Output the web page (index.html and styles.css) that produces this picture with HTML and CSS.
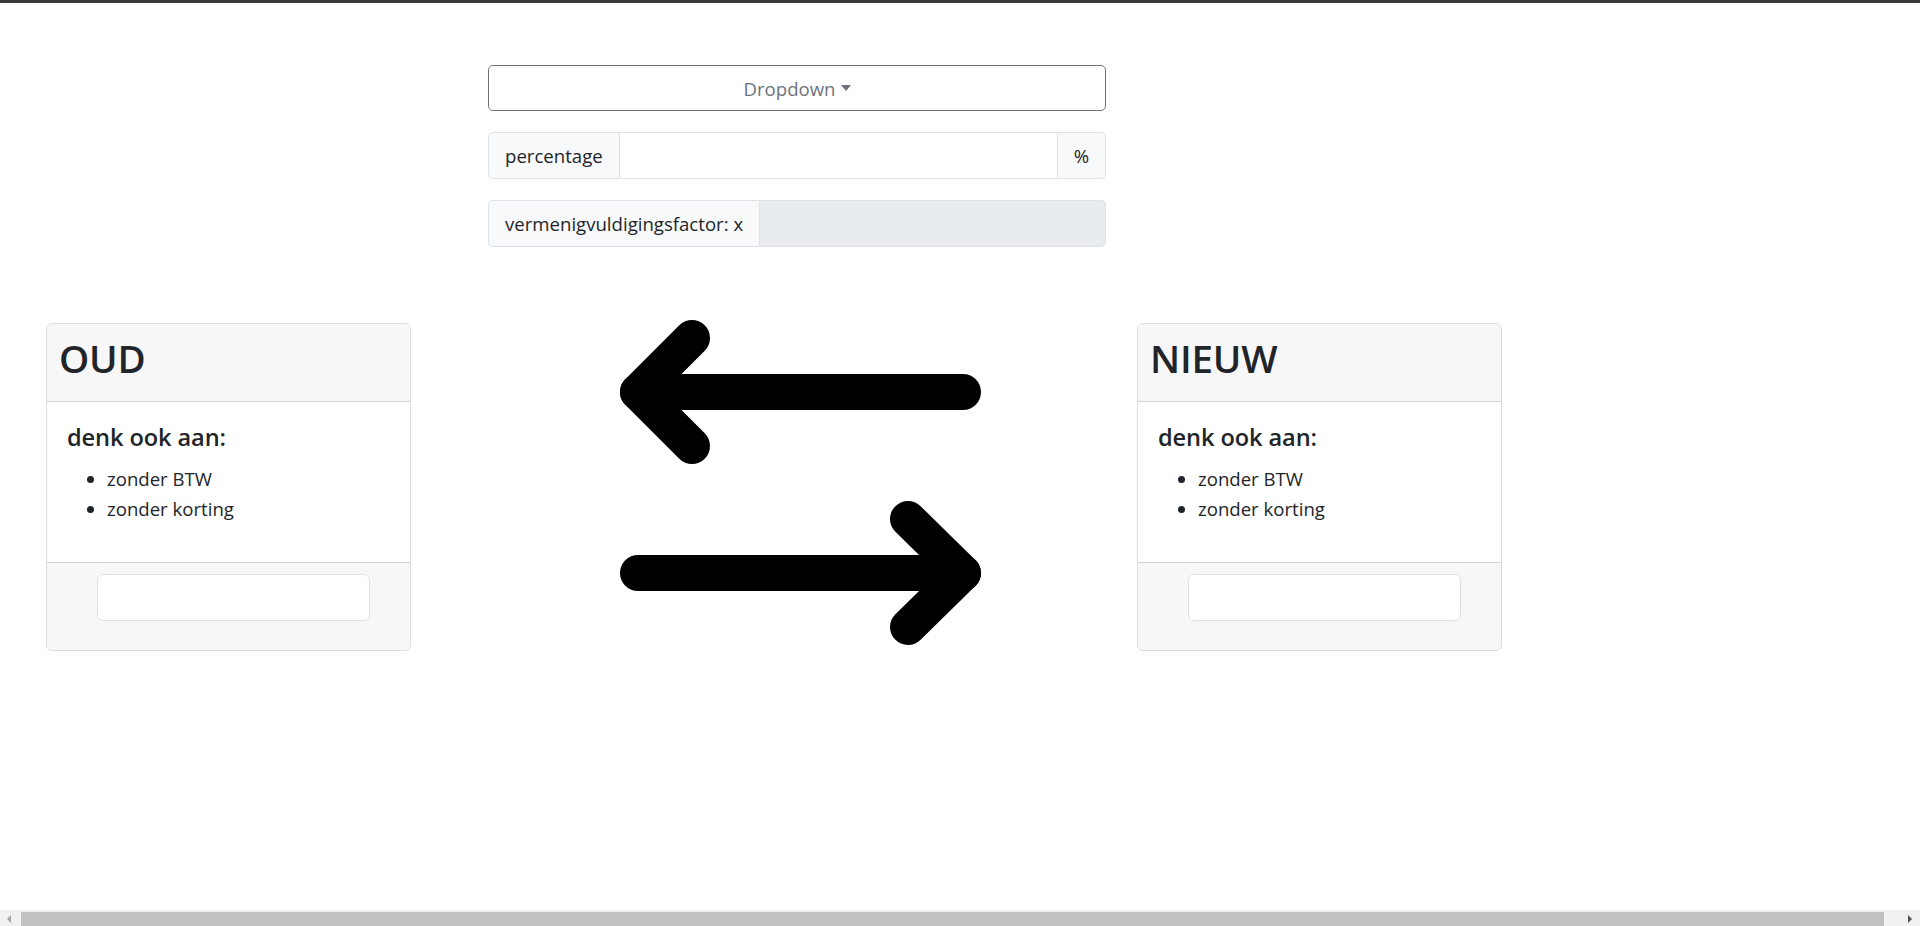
FILE: index.html
```html
<!DOCTYPE html>
<html lang="nl">
<head>
<meta charset="utf-8">
<title>Percentage rekenen</title>
<link rel="stylesheet" href="styles.css">
</head>
<body>
<div class="topbar"></div>
<main class="page">
  <section class="controls">
    <button class="dropdown" type="button">Dropdown<span class="caret"></span></button>
    <div class="input-group">
      <span class="addon">percentage</span>
      <input class="field" type="text">
      <span class="addon addon-end">%</span>
    </div>
    <div class="input-group">
      <span class="addon">vermenigvuldigingsfactor: x</span>
      <input class="field field-disabled" type="text" disabled>
    </div>
  </section>

  <section class="compare">
    <article class="card">
      <header class="card-header"><h1 class="card-title">OUD</h1></header>
      <div class="card-body">
        <h4 class="card-sub">denk ook aan:</h4>
        <ul class="hints">
          <li>zonder BTW</li>
          <li>zonder korting</li>
        </ul>
      </div>
      <footer class="card-footer"><input class="footer-input" type="text"></footer>
    </article>

    <div class="swap">
      <svg width="361" height="327" viewBox="620 320 361 327" fill="none" stroke="#000" stroke-width="36" stroke-linecap="round" stroke-linejoin="round">
        <path d="M963 392H638"/>
        <path d="M692 338L638 392L692 446"/>
        <path d="M638 573H963"/>
        <path d="M908 519L963 573L908 627"/>
      </svg>
    </div>

    <article class="card card-right">
      <header class="card-header"><h1 class="card-title">NIEUW</h1></header>
      <div class="card-body">
        <h4 class="card-sub">denk ook aan:</h4>
        <ul class="hints">
          <li>zonder BTW</li>
          <li>zonder korting</li>
        </ul>
      </div>
      <footer class="card-footer"><input class="footer-input" type="text"></footer>
    </article>
  </section>
</main>
<div class="hscroll">
  <span class="hs-btn hs-left"></span>
  <span class="hs-thumb"></span>
  <span class="hs-btn hs-right"></span>
</div>
</body>
</html>
```

FILE: styles.css
```css
* { box-sizing: border-box; }

html, body {
  margin: 0;
  padding: 0;
  background: #fff;
}

body {
  font-family: "Open Sans", "Noto Sans", sans-serif;
  font-size: 18.6px;
  line-height: 1.5;
  color: #212529;
  overflow: hidden;
  height: 926px;
}

.topbar {
  height: 3px;
  background: #3a3a3a;
}

.controls {
  margin-left: 488px;
  width: 618px;
  padding-top: 62px;
  display: flex;
  flex-direction: column;
  gap: 21px;
}

.dropdown {
  height: 46px;
  width: 100%;
  border: 1px solid #6c757d;
  border-radius: 5px;
  background: #fff;
  color: #6c757d;
  font-family: inherit;
  font-size: 18.6px;
  display: flex;
  align-items: center;
  justify-content: center;
  padding: 0;
}

.caret {
  display: inline-block;
  width: 0;
  height: 0;
  margin-left: 5px;
  margin-top: 0;
  border-top: 6px solid #6c757d;
  border-left: 5.5px solid transparent;
  border-right: 5.5px solid transparent;
}

.input-group {
  display: flex;
  height: 47px;
}

.addon {
  display: flex;
  align-items: center;
  padding: 0 16px;
  background: #f8f9fa;
  border: 1px solid #dee2e6;
  border-radius: 5px 0 0 5px;
  white-space: nowrap;
}

.addon-end {
  border-radius: 0 5px 5px 0;
  border-left: 0;
}

.field {
  flex: 1;
  min-width: 0;
  border: 1px solid #dee2e6;
  border-left: 0;
  background: #fff;
  font-family: inherit;
  font-size: 18.6px;
  padding: 0 16px;
}

.field-disabled {
  background: #e9ecef;
  border-radius: 0 5px 5px 0;
}

.compare {
  display: flex;
  align-items: flex-start;
  padding-left: 46px;
  margin-top: 76px;
}

.card {
  width: 365px;
  border: 1px solid #dcdcdc;
  border-radius: 6px;
  overflow: hidden;
}

.card-header {
  background: #f7f7f7;
  padding: 11px 12px 20px;
  border-bottom: 1px solid #d4d4d4;
}

.card-title {
  margin: 0;
  font-size: 38.5px;
  line-height: 46px;
  font-weight: 600;
  letter-spacing: -0.2px;
}

.card-body {
  padding: 21px 20px 22px;
}

.card-sub {
  margin: 0 0 12px;
  font-size: 23.6px;
  line-height: 28.8px;
  font-weight: 600;
  letter-spacing: -0.1px;
}

.hints {
  margin: 0 0 16px;
  padding-left: 40px;
  line-height: 30px;
}

.card-footer {
  background: #f7f7f7;
  border-top: 1px solid #d4d4d4;
  padding: 11px 0 29px 50px;
}

.footer-input {
  display: block;
  width: 273px;
  height: 47px;
  border: 1px solid #dee2e6;
  border-radius: 6px;
  background: #fff;
}

.swap {
  margin-left: 209px;
  margin-top: -3px;
  line-height: 0;
}

.swap svg { display: block; }

.card-right {
  margin-left: 156px;
}

.hscroll {
  position: fixed;
  left: 0;
  right: 0;
  bottom: 0;
  height: 16px;
  background: #f1f1f1;
}

.hs-thumb {
  position: absolute;
  left: 21px;
  right: 36px;
  top: 2px;
  bottom: 0;
  background: #c1c1c1;
}

.hs-btn {
  position: absolute;
  top: 5px;
  width: 0;
  height: 0;
  border-top: 4px solid transparent;
  border-bottom: 4px solid transparent;
}

.hs-left {
  left: 7px;
  border-right: 4px solid #a3a3a3;
}

.hs-right {
  right: 8px;
  border-left: 4px solid #505050;
}
```
